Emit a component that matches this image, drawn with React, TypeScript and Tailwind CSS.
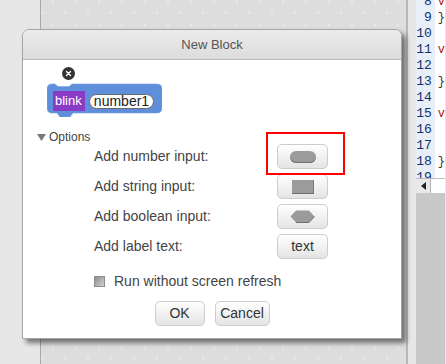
import React from 'react';

const lines: { n: number; code: string; kw?: boolean }[] = [
  { n: 8, code: 'v', kw: true },
  { n: 9, code: '}' },
  { n: 10, code: '' },
  { n: 11, code: 'v', kw: true },
  { n: 12, code: '' },
  { n: 13, code: '}' },
  { n: 14, code: '' },
  { n: 15, code: 'v', kw: true },
  { n: 16, code: '' },
  { n: 17, code: '' },
  { n: 18, code: '}' },
  { n: 19, code: '' },
];

const ShapeButton: React.FC<{ children: React.ReactNode }> = ({ children }) => (
  <div className="w-[51px] h-[25px] rounded-[5px] border border-[#cdcdcd] bg-gradient-to-b from-white to-[#e4e4e4] flex items-center justify-center text-[14px] text-[#333]">
    {children}
  </div>
);

const PlainButton: React.FC<{ label: string; width: string }> = ({ label, width }) => (
  <div className={`${width} h-[25px] rounded-[5px] border border-[#cdcdcd] bg-gradient-to-b from-white to-[#e4e4e4] flex items-center justify-center text-[14px] text-[#333]`}>
    {label}
  </div>
);

const BlockPreview: React.FC = () => (
  <div className="relative w-[115px] h-[34px]">
    <svg className="absolute inset-0" width="115" height="34" viewBox="0 0 115 34">
      <path
        d="M0,6 Q0,1 5,1 L8,1 L11,3.5 L22,3.5 L25,1 L110,1 Q115,1 115,6 L115,25 Q115,30 110,30 L26,30 L23,34 L13,34 L10,30 L5,30 Q0,30 0,25 Z"
        fill="#5f8edb"
        stroke="#7aa2e4"
        strokeWidth="0.6"
      />
    </svg>
    {/* close badge */}
    <div className="absolute left-[15px] top-[-16px] w-[13px] h-[13px] rounded-full bg-[#333] flex items-center justify-center">
      <svg width="7" height="7" viewBox="0 0 7 7">
        <path d="M1.5,1.5 L5.5,5.5 M5.5,1.5 L1.5,5.5" stroke="#fff" strokeWidth="1.4" strokeLinecap="round" />
      </svg>
    </div>
    <div className="relative flex items-center gap-[4px] pl-[6px] pt-[8px]">
      <div className="w-[32px] h-[20px] bg-[#8a3bc6] text-white text-[13px] leading-[20px] pl-[2px]">blink</div>
      <div className="w-[65px] h-[15px] rounded-full bg-white border border-[#6a6a6a] text-[14px] leading-[13px] text-[#222] flex items-center justify-center">
        number1
      </div>
    </div>
  </div>
);

const Workspace: React.FC = () => (
  <div className="relative w-[368px] h-full bg-[#dcdddc] border-l border-r-2 border-l-[#a9a9a9] border-r-[#b8b8b8]">
    <svg className="absolute inset-0" width="100%" height="100%">
      <defs>
        <pattern id="grid" x="0" y="0" width="23" height="23" patternUnits="userSpaceOnUse">
          <path d="M12,0.5 L12,3.5 M10.5,2 L13.5,2 M1,11.5 L1,14.5 M-0.5,13 L2.5,13 M24,11.5 L24,14.5 M22.5,13 L25.5,13" stroke="#e9eae9" strokeWidth="1" />
        </pattern>
      </defs>
      <rect width="100%" height="100%" fill="url(#grid)" />
    </svg>
  </div>
);

const CodePanel: React.FC = () => (
  <div className="w-[29px] h-full flex flex-col bg-[#c8c8c8]">
    <div className="h-[178px] overflow-hidden flex bg-white">
      <div className="w-[20px] bg-[#e8eff8]">
        <div className="-mt-[6px]">
          {lines.map((l) => (
            <div key={l.n} className="h-[16px] leading-[16px] text-right pr-[3px] text-[13px] text-[#17326e]">
              {l.n}
            </div>
          ))}
        </div>
      </div>
      <div className="flex-1 pl-[3px]">
        <div className="-mt-[6px]">
          {lines.map((l) => (
            <div key={l.n} className={`h-[16px] leading-[16px] text-[12px] ${l.kw ? 'text-[#b0161a]' : 'text-[#333]'}`}>
              {l.code}
            </div>
          ))}
        </div>
      </div>
    </div>
    <div className="h-[15px] flex border-t border-[#bdbdbd] bg-white">
      <div className="w-[15px] h-full bg-[#e9e9e9] border-r border-[#b5b5b5] flex items-center justify-center">
        <svg width="5" height="8" viewBox="0 0 5 8">
          <path d="M5,0 L0,4 L5,8 Z" fill="#222" />
        </svg>
      </div>
      <div className="flex-1" />
    </div>
  </div>
);

export default function App() {
  return (
    <div className="relative w-[446px] h-[364px] overflow-hidden flex bg-[#e6e7e6] font-['Liberation_Sans',Arial,sans-serif]">
      <div className="w-[40px] h-full bg-[#e6e7e6]" />
      <Workspace />
      <div className="w-[8px] h-full bg-[#e6e7e6]" />
      <div style={{ fontFamily: "'Liberation Mono', monospace" }}>
        <CodePanel />
      </div>

      {/* dialog */}
      <div className="absolute left-[22px] top-[29px] w-[380px] h-[310px] flex flex-col bg-white border border-[#a6a6a6] rounded-t-[7px] shadow-[4px_4px_5px_rgba(0,0,0,0.5)]">
        <div className="h-[30px] shrink-0 rounded-t-[6px] bg-gradient-to-b from-[#ececec] to-[#dcdcdc] border-b border-[#b9b9b9] flex items-center justify-center text-[13px] text-[#555]">
          New Block
        </div>
        <div className="flex-1 flex flex-col">
          <div className="pl-[24px] pt-[23px]">
            <BlockPreview />
          </div>

          <div className="mt-[13px] h-[14px] pl-[14px] flex items-center gap-[3px] text-[12px] text-[#444]">
            <svg width="9" height="7" viewBox="0 0 9 7">
              <path d="M0,0 L9,0 L4.5,7 Z" fill="#7a7a7a" />
            </svg>
            <span>Options</span>
          </div>

          <div className="pl-[71px] grid grid-cols-[183px_51px] auto-rows-[25px] gap-y-[5px] text-[14px] text-[#444]">
            <div className="flex items-center">Add number input:</div>
            <div className="relative">
              <ShapeButton>
                <div className="w-[26px] h-[12px] rounded-full bg-[#9b9b9b] shadow-[inset_0_-1px_0_#6f6f6f]" />
              </ShapeButton>
              <div className="absolute left-[-11px] top-[-12px] w-[79px] h-[43px] border-2 border-[#ff0000]" />
            </div>

            <div className="flex items-center">Add string input:</div>
            <ShapeButton>
              <div className="w-[22px] h-[14px] bg-[#9b9b9b] shadow-[inset_0_-1px_0_#6f6f6f,inset_-1px_0_0_#7a7a7a]" />
            </ShapeButton>

            <div className="flex items-center">Add boolean input:</div>
            <ShapeButton>
              <svg width="25" height="13" viewBox="0 0 25 13">
                <path d="M6,0.5 L19,0.5 L24.5,6.5 L19,12.5 L6,12.5 L0.5,6.5 Z" fill="#9b9b9b" />
                <path d="M24.5,6.5 L19,12.5 L6,12.5" fill="none" stroke="#6f6f6f" strokeWidth="1" />
              </svg>
            </ShapeButton>

            <div className="flex items-center">Add label text:</div>
            <ShapeButton>text</ShapeButton>
          </div>

          <div className="mt-[15px] h-[14px] pl-[71px] flex items-center gap-[9px] text-[14px] text-[#444]">
            <div className="w-[11px] h-[11px] border border-[#8c8c8c] bg-gradient-to-br from-[#8f8f8f] to-[#d2d2d2]" />
            <span>Run without screen refresh</span>
          </div>

          <div className="mt-[13px] flex justify-center gap-[10px]">
            <PlainButton label="OK" width="w-[50px]" />
            <PlainButton label="Cancel" width="w-[55px]" />
          </div>
        </div>
      </div>
    </div>
  );
}
